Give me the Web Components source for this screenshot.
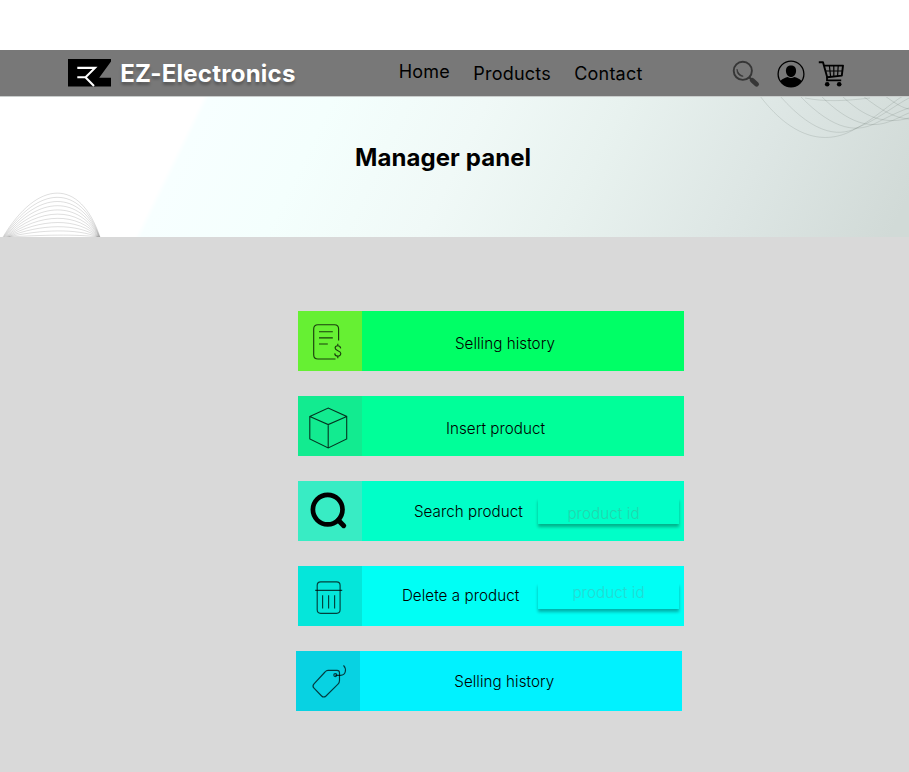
<!DOCTYPE html>
<html lang="en">
<head>
<meta charset="utf-8">
<title>EZ-Electronics</title>
<style>
body{margin:0;background:#d9d9d9;font-family:Inter,"Liberation Sans",sans-serif;color:#000}
</style>
</head>
<body>
<manager-page></manager-page>
<script>
const define = (name, html) => customElements.define(name, class extends HTMLElement {
  constructor() {
    super();
    this.attachShadow({ mode: 'open' }).innerHTML = html;
  }
});

const icons = {
  logo: [44, 28, `<path d="M0 0H43V2.5L31.2 18.7H43V27.6H0Z"/><path d="M9.3 8.9H27L17.6 18.3H9.3M17.2 18L26 27" fill="none" stroke="#fff" stroke-width="2.1"/>`],
  glass: [28, 28, `<circle cx="10.8" cy="10.8" r="9.1" fill="none" stroke="#363636" stroke-width="1.9"/><path d="M5 9.2C4.5 14 8 16.6 11.2 16.2C8 15 6 13 5 9.2Z" fill="#363636" stroke="#363636" stroke-width=".7"/><path d="M17.2 17.2L19.8 19.8" stroke="#363636" stroke-width="2"/><path d="M20.2 20.2L24.6 24.2" stroke="#363636" stroke-width="4.8" stroke-linecap="round"/>`],
  user: [28, 28, `<circle cx="14" cy="14" r="12.9" fill="none" stroke="#000" stroke-width="1.3"/><path d="M8.9 10.8C8.9 7.2 11 5.4 14 5.4S19.1 7.2 19.1 10.8C19.1 14.2 16.8 17.1 14 17.1S8.9 14.2 8.9 10.8Z"/><path d="M3.4 21C5 18.5 8.6 17.6 10.7 16.9C12.8 18.3 15.2 18.3 17.3 16.9C19.6 17.6 23 18.5 24.6 21C22.4 25 18.5 27 14 27S5.6 25 3.4 21Z"/>`],
  cart: [28, 28, `<g fill="none" stroke="#000"><path d="M.8 2.3H5L9.2 17.3L23.8 15.6L25 5.6H6" stroke-width="1.9" stroke-linejoin="round"/><path d="M9 17V20.3H23.2" stroke-width="1.8"/><path d="M7.4 11H24.6M11.4 5.8L12.6 16.6M15.8 5.8V16.4M20.2 5.8L19.6 16" stroke-width="1.2"/></g><circle cx="9.2" cy="24.3" r="2.3"/><circle cx="21.2" cy="24.3" r="2.3"/>`],
  bill: [64, 60, `<g fill="none" stroke="#000" stroke-opacity=".75" stroke-width="1.15"><path d="M37 48H19.5Q15.2 48 15.2 43.7V18Q15.2 13.7 19.5 13.7H36Q40.1 13.7 40.1 18V29.6"/><path d="M20.5 20.7H34.3M20.5 26.8H34.3M20.5 33H29.3"/><path d="M42.2 37.3C41.7 33.8 36.6 34 36.6 37.1C36.6 40.3 42.3 39.2 42.3 42.5C42.3 46 36.5 46 36.2 42.4M39.3 32.8V34.8M39.3 45.2V47.3"/></g>`],
  box: [64, 60, `<path d="M11.3 20.4L29.7 12L48.2 20.4V43L29.7 52L11.3 43ZM11.3 20.4L29.7 28.6L48.2 20.4M29.7 28.6V52" fill="none" stroke="#000" stroke-opacity=".78" stroke-width="1.1"/>`],
  search: [64, 60, `<g fill="none" stroke="#000"><circle cx="29.2" cy="28.6" r="14.8" stroke-width="4.7"/><path d="M39.8 39.2L45.2 44.7" stroke-width="5" stroke-linecap="round"/></g>`],
  bin: [64, 60, `<g fill="none" stroke="#000" stroke-opacity=".72" stroke-width="1.15"><rect x="18.7" y="15.8" width="22.9" height="31.5" rx="3.5"/><path d="M16.7 24.3H43.7M24.1 29.3V42.5M30.1 29.3V42.5M36.1 29.3V42.5"/></g>`],
  tag: [64, 60, `<g fill="none" stroke="#000" stroke-opacity=".72" stroke-width="1.15"><path d="M32 19.3H41Q43.5 19.3 43.5 21.8V29.6Q43.5 31.7 42 33.2L30 45Q27.8 47 25.6 45L18 37.2Q16 35 18 32.8L29 21Q30.4 19.3 32 19.3Z"/><circle cx="39.3" cy="24.1" r="1.5"/><path d="M39.3 24.3H44.5C50 24.3 50.8 18 47.5 14.3"/></g>`]
};

customElements.define('ez-icon', class extends HTMLElement {
  constructor() {
    super();
    this.attachShadow({ mode: 'open' });
  }
  connectedCallback() {
    const [w, h, body] = icons[this.getAttribute('name')];
    const dx = w === 64 && this.getAttribute('name') !== 'tag' ? .5 : 0;
    this.shadowRoot.innerHTML = `<style>:host{display:block;flex:none;width:${w}px;height:${h}px}svg{display:block}</style><svg width="${w}" height="${h}" viewBox="${-dx} 0 ${w} ${h}">${body}</svg>`;
  }
});

define('ez-link', `<style>:host{display:block;font-size:18px;line-height:22px;letter-spacing:.2px;white-space:nowrap}</style><slot></slot>`);

define('ez-header', `<style>
:host{display:flex;align-items:flex-start;box-sizing:border-box;margin-top:50px;height:47px;background:#787878;border-bottom:1px solid #c9cdcc;padding-left:67.5px}
.logo{margin-top:9.4px}
.brand{margin:9px 0 0 8.7px;width:278.5px;color:#fff;font-size:24px;font-weight:700;line-height:30px;letter-spacing:.24px;text-shadow:0 3px 3px rgba(0,0,0,.28);white-space:nowrap}
nav{display:flex;gap:23.4px;width:333px;padding-top:11px}
nav ez-link+ez-link{margin-top:2px}
.tools{display:flex;padding-top:10px}
.user{margin-left:17px}.cart{margin-left:13px}
</style>
<ez-icon class="logo" name="logo"></ez-icon>
<div class="brand">EZ-Electronics</div>
<nav><ez-link>Home</ez-link><ez-link>Products</ez-link><ez-link>Contact</ez-link></nav>
<div class="tools"><ez-icon name="glass"></ez-icon><ez-icon class="user" name="user"></ez-icon><ez-icon class="cart" name="cart"></ez-icon></div>`);

const hill = Array.from({ length: 11 }, (_, i) => {
  const d = i * 5.6, s = i * .6;
  return `M${3 + s} 140C${38 + s * .5} ${82 + d} ${80 - s * .5} ${81 + d} ${100 - s * .4} 140`;
}).join('');

define('ez-hero', `<style>
:host{display:block;position:relative;height:140px;overflow:hidden;background:linear-gradient(116deg,#fff 20.8%,#f7ffff 21.4%,#f4fffd 34%,#f0f9f7 50%,#e8f2ef 64%,#dde6e4 81%,#d1dad7 98%)}
svg{position:absolute;left:0;top:0}
h1{position:relative;margin:0;padding:46px 0 0 355px;font-size:24px;line-height:30px;font-weight:700;letter-spacing:.08px;white-space:nowrap}
</style>
<svg width="909" height="140" fill="none"><path d="${hill}" stroke="#000" stroke-opacity=".13"/>
<path transform="translate(0 -1)" stroke="#40504b" stroke-opacity=".15" d="M760 0C798 50 833 46 855 33C873 24 891 7 903 0M780 0C817 42 842 40 859 31C878 23 894 10 909 2M800 0C835 36 858 37 878 26C892 19 900 15 909 12M821 0C850 29 870 31 885 27C896 24 903 19 909 17M842 0C865 22 886 29 909 22M863 0C882 15 895 22 909 23M885 0C896 8 903 12 909 13M805 2C825 6 845 5 870 2"/></svg>
<h1><slot></slot></h1>`);

define('product-field', `<style>
:host{display:block;box-sizing:border-box;width:141px;height:26px;padding-left:var(--inset);padding-top:var(--drop);font-size:15.2px;line-height:20px;letter-spacing:.08px;font-weight:300;color:var(--hint);box-shadow:0 3px 3px rgba(0,0,0,.3);white-space:nowrap}
</style><slot></slot>`);

define('action-row', `<style>
:host{display:flex;width:386px;height:60px;margin-left:var(--shift,0px);background:var(--bar)}
.icon{width:64px;height:60px;background:var(--tile)}
.body{display:flex;flex:1;align-items:flex-start}
.label{box-sizing:border-box;padding-left:var(--start);margin-top:var(--top);width:176px;font-size:15.2px;line-height:20px;letter-spacing:.05px;font-weight:300;white-space:nowrap}
::slotted(product-field){margin-top:17px}
</style>
<div class="icon"><slot name="icon"></slot></div>
<div class="body"><div class="label"><slot></slot></div><slot name="field"></slot></div>`);

define('manager-page', `<style>
:host{display:flex;flex-direction:column;height:772px;overflow:hidden;background:linear-gradient(#fff 50px,#d9d9d9 50px)}
main{display:flex;flex-direction:column;gap:25.1px;padding:74px 0 0 298.4px}
</style>
<ez-header></ez-header>
<ez-hero>Manager panel</ez-hero>
<main>
<action-row style="--bar:#00ff66;--tile:#66f033;--start:92.5px;--top:23px"><ez-icon slot="icon" name="bill"></ez-icon>Selling history</action-row>
<action-row style="--bar:#00ff99;--tile:#12eb90;--start:83.5px;--top:23px"><ez-icon slot="icon" name="box"></ez-icon>Insert product</action-row>
<action-row style="--bar:#00ffc8;--tile:#38ecc4;--start:51.5px;--top:21px"><ez-icon slot="icon" name="search"></ez-icon>Search product<product-field slot="field" style="--inset:29px;--drop:6px;--hint:#22d6ae">product id</product-field></action-row>
<action-row style="--bar:#00fff5;--tile:#05e6da;--start:39.5px;--top:20px"><ez-icon slot="icon" name="bin"></ez-icon>Delete a product<product-field slot="field" style="--inset:34px;--drop:0px;--hint:#24d9d2">product id</product-field></action-row>
<action-row style="--shift:-2.3px;--bar:#00f2ff;--tile:#08d2e2;--start:94.2px;--top:21px"><ez-icon slot="icon" name="tag"></ez-icon>Selling history</action-row>
</main>`);
</script>
</body>
</html>
